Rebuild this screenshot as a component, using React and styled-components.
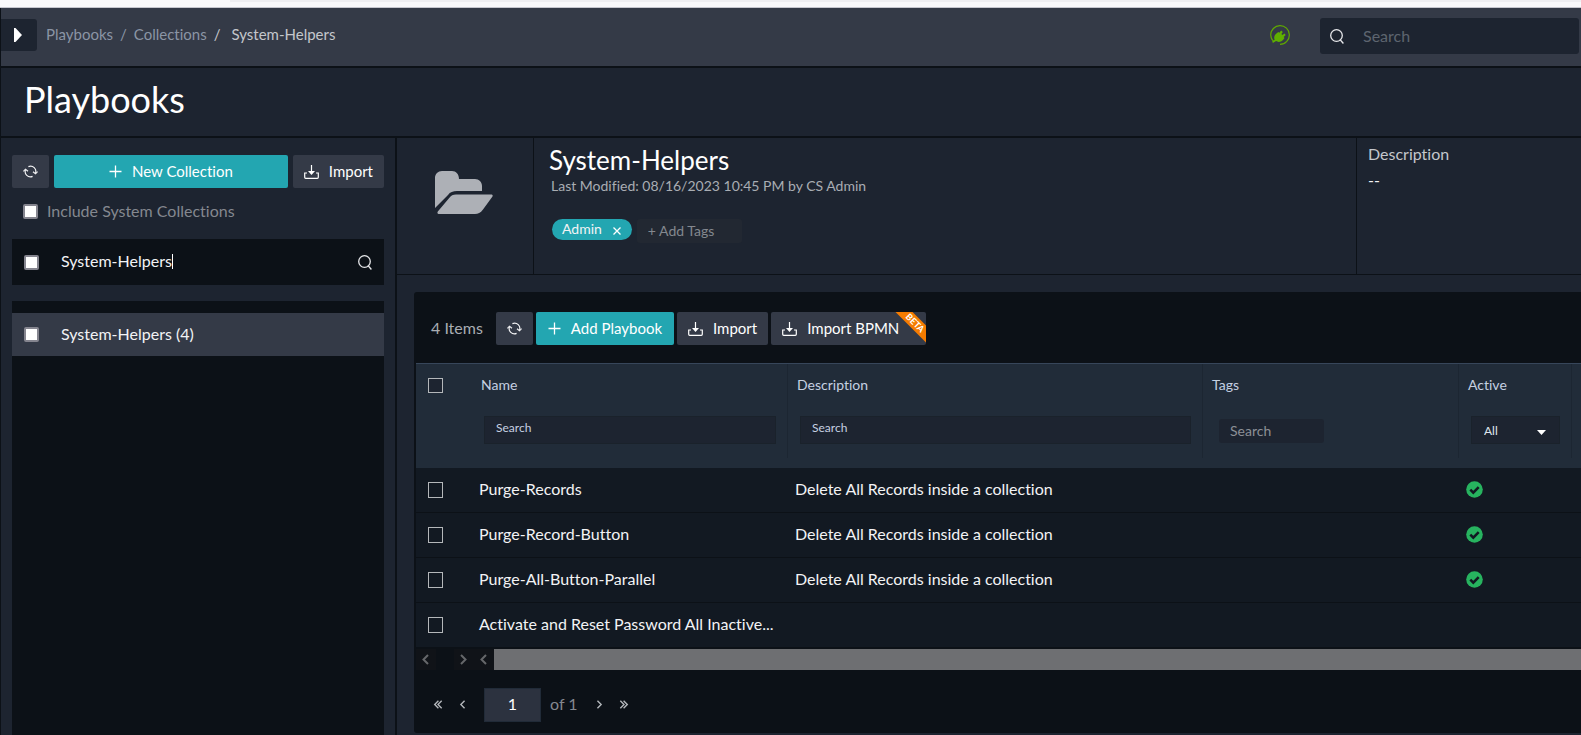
import React from "react";
import styled, { createGlobalStyle, css } from "styled-components";

const c = {
  ink: "#0c1117",
  page: "#1d2430",
  bar: "#343a47",
  row: "#121922",
  head: "#212c39",
  teal: "#23a6b1",
  text: "#f2f3f5",
  soft: "#a9adb3",
  muted: "#84888f",
  label: "#c5d0e2",
};

const GlobalStyle = createGlobalStyle`
  *, *::before, *::after { box-sizing: border-box; }
  html, body { margin: 0; background: ${c.page}; }
  body, button, input, select {
    font-family: Lato, "Liberation Sans", sans-serif;
    font-variant-ligatures: none;
  }
  body { font-size: 16px; line-height: 20px; color: ${c.text}; overflow-x: hidden; }
  button { cursor: pointer; }
  h1, h2, h3, p { margin: 0; font-weight: 400; }
  svg { display: block; flex: none; }
`;

const Page = styled.div`
  display: flex;
  flex-direction: column;
  min-height: 100vh;
`;

const BrowserEdge = styled.div`
  height: 8px;
  background: #f9f9fb;
  border-bottom: 1px solid #c6c7cf;
  &::before {
    content: "";
    display: block;
    height: 2px;
    margin-left: 230px;
    background: #efeff2;
  }
`;

const AppFrame = styled.div`
  flex: 1;
  display: flex;
  flex-direction: column;
  border-left: 1px solid ${c.ink};
`;

const TopBar = styled.header`
  display: flex;
  align-items: center;
  height: 60px;
  padding: 0 2px 4px 0;
  background: ${c.bar};
  border-bottom: 2px solid ${c.ink};
`;

const MenuToggle = styled.button`
  display: grid;
  place-items: center;
  width: 36px;
  height: 32px;
  padding: 0 2px 0 0;
  border: 0;
  border-radius: 0 3px 3px 0;
  background: ${c.page};
`;

const Crumbs = styled.nav`
  display: flex;
  gap: 7px;
  padding: 0 0 2px 9px;
  margin-right: auto;
  color: ${c.soft};
  font-size: 15px;
`;

const Crumb = styled.a`
  color: #8b95a5;
  text-decoration: none;
`;

const CrumbSlash = styled.span`
  color: ${(p) => (p.$last ? "#c4c7cc" : "#8b95a5")};
`;

const CrumbCurrent = styled.span`
  padding-left: 4px;
  color: #c4c7cc;
`;

const GlobalSearch = styled.label`
  display: flex;
  align-items: center;
  gap: 19px;
  width: 259px;
  height: 36px;
  margin: 2px 0 0 30px;
  padding: 0 10px;
  border-radius: 3px;
  background: ${c.page};
`;

const PlainInput = styled.input`
  min-width: 0;
  padding: 0;
  border: 0;
  outline: 0;
  background: transparent;
  color: ${c.text};
  font-size: 16px;
  line-height: 20px;
  caret-color: transparent;
  ${(p) => (p.$hug ? css`field-sizing: content;` : css`flex: 1;`)}
  &::placeholder { color: #5d646f; opacity: 1; }
`;

const TitleBar = styled.div`
  height: 70px;
  padding: 9px 23px;
  border-bottom: 2px solid ${c.ink};
`;

const Title = styled.h1`
  font-size: 36px;
  line-height: 44px;
  color: #fff;
`;

const Body = styled.div`
  flex: 1;
  display: flex;
`;

const Sidebar = styled.aside`
  display: flex;
  flex-direction: column;
  flex: none;
  width: 396px;
  padding: 17px 11px 0;
  border-right: 2px solid ${c.ink};
`;

const ButtonRow = styled.div`
  display: flex;
  align-items: center;
  gap: 5px;
`;

const Button = styled.button`
  position: relative;
  display: flex;
  align-items: center;
  justify-content: center;
  gap: 10px;
  height: 33px;
  padding: 0 11px;
  border: 0;
  border-radius: 2px;
  overflow: hidden;
  background: ${(p) => (p.$primary ? c.teal : c.bar)};
  color: #fff;
  font-size: 15px;
  line-height: 20px;
  white-space: nowrap;
  ${(p) => p.$primary && css`padding: 0 12px;`}
  ${(p) => p.$grow && css`flex: 1;`}
  ${(p) => p.$square && css`width: 37px; padding: 0;`}
  ${(p) => p.$ribbon && css`padding-right: 27px;`}
`;

const ButtonText = styled.span`
  padding-bottom: 2px;
`;

const IncludeRow = styled.label`
  display: flex;
  align-items: center;
  gap: 9px;
  margin-top: 13px;
  padding-left: 11px;
  color: ${c.muted};
`;

const Tick = styled.input.attrs({ type: "checkbox" })`
  appearance: none;
  flex: none;
  width: 15px;
  height: 15px;
  margin: 0;
  border: 2px solid #85858f;
  border-radius: 2px;
  background: #fff;
`;

const CollectionSearch = styled.div`
  display: flex;
  align-items: center;
  height: 46px;
  margin-top: 18px;
  padding: 0 12px;
  background: ${c.ink};
`;

const SearchText = styled.div`
  flex: 1;
  display: flex;
  align-items: center;
  padding: 0 0 2px 22px;
`;

const Caret = styled.span`
  width: 1px;
  height: 15px;
  background: #fff;
`;

const CollectionList = styled.div`
  flex: 1;
  margin-top: 16px;
  padding-top: 12px;
  background: ${c.ink};
`;

const CollectionItem = styled.label`
  display: flex;
  align-items: center;
  gap: 22px;
  height: 43px;
  padding: 0 12px;
  background: ${c.bar};
`;

const CollectionLabel = styled.span`
  padding-bottom: 2px;
`;

const Main = styled.main`
  flex: 1;
  min-width: 0;
`;

const Summary = styled.section`
  display: flex;
  height: 137px;
  border-bottom: 1px solid ${c.ink};
`;

const FolderCell = styled.div`
  width: 137px;
  padding: 33px 0 0 38px;
  border-right: 1px solid ${c.ink};
`;

const InfoCell = styled.div`
  flex: 1;
  padding: 6px 15px;
`;

const CollectionName = styled.h2`
  font-size: 26px;
  line-height: 32px;
  color: #fff;
`;

const Modified = styled.p`
  padding-left: 2px;
  font-size: 14px;
  color: ${c.soft};
`;

const TagRow = styled.div`
  display: flex;
  align-items: flex-start;
  gap: 5px;
  margin-top: 23px;
  padding-left: 3px;
`;

const Tag = styled.span`
  display: flex;
  align-items: center;
  gap: 11px;
  height: 21px;
  padding: 0 11px 0 10px;
  border-radius: 11px;
  background: ${c.teal};
  font-size: 14px;
  line-height: 18px;
`;

const TagText = styled.span`
  padding-bottom: 2px;
`;

const TagRemove = styled.button`
  padding: 3px 0 0;
  border: 0;
  background: transparent;
  color: #fff;
`;

const AddTags = styled.input`
  width: 105px;
  height: 24px;
  padding: 0 11px 2px;
  border: 0;
  border-radius: 3px;
  background: #222832;
  font-size: 14px;
  color: ${c.soft};
  &::placeholder { color: ${c.muted}; opacity: 1; }
`;

const DescriptionCell = styled.div`
  width: 225px;
  padding: 6px 11px;
  border-left: 1px solid ${c.ink};
`;

const DescriptionLabel = styled.h3`
  font-size: 16px;
  line-height: 20px;
  color: #c4c7cc;
`;

const DescriptionValue = styled.p`
  margin-top: 6px;
`;

const Panel = styled.section`
  margin: 17px 0 2px 17px;
  padding-left: 2px;
  border-radius: 3px 0 0 3px;
  background: ${c.ink};
`;

const Toolbar = styled.div`
  display: flex;
  align-items: center;
  gap: 3px;
  height: 71px;
  padding: 2px 0 0 15px;
`;

const ItemCount = styled.span`
  padding: 0 10px 2px 0;
  color: ${c.soft};
`;

const Beta = styled.span`
  position: absolute;
  top: 5px;
  right: -19px;
  width: 60px;
  background: #f57c00;
  color: #fff;
  font-size: 9px;
  font-weight: 700;
  line-height: 12px;
  text-align: center;
  transform: rotate(45deg);
`;

const TableClip = styled.div`
  overflow: hidden;
`;

const Grid = styled.table`
  width: 100%;
  table-layout: fixed;
  border-collapse: separate;
  border-spacing: 0;
`;

const Col = styled.col`
  width: ${(p) => p.$w};
`;

const Th = styled.th`
  height: 105px;
  padding: 0 0 10px;
  border-top: 1px solid #37465a;
  background: ${c.head};
  color: ${c.label};
  font-size: 14px;
  font-weight: 400;
  text-align: left;
  vertical-align: top;
`;

const HeadCell = styled.div`
  height: 94px;
  padding: 11px 11px 0 ${(p) => (p.$tick ? 12 : 9)}px;
  border-right: 1px solid ${(p) => (p.$tick ? c.head : "#1c2632")};
`;

const FilterInput = styled.input`
  display: block;
  width: calc(100% - 3px);
  height: 28px;
  margin: 21px 0 0 3px;
  padding: 0 12px 5px 11px;
  border: 1px solid #1a222b;
  background: ${c.page};
  color: ${c.label};
  font-size: 12px;
  &::placeholder { color: ${c.label}; opacity: 1; }
`;

const TagFilter = styled.input`
  display: block;
  width: 105px;
  height: 24px;
  margin: 24px 0 0 7px;
  padding: 0 11px 2px;
  border: 0;
  border-radius: 3px;
  background: ${c.page};
  font-size: 14px;
  &::placeholder { color: #8c9096; opacity: 1; }
`;

const SelectBox = styled.div`
  position: relative;
  width: 89px;
  margin: 21px 0 0 3px;
  svg { position: absolute; right: 14px; top: 14px; pointer-events: none; }
`;

const Select = styled.select`
  appearance: none;
  display: block;
  width: 100%;
  height: 28px;
  padding: 0 12px;
  border: 1px solid #1a222b;
  border-radius: 0;
  background: ${c.page};
  color: #dfe5ee;
  font-size: 12px;
`;

const Td = styled.td`
  height: 45px;
  padding: 0 4px 2px 7px;
  border-bottom: 1px solid ${c.ink};
  background: ${c.row};
  color: ${c.text};
  white-space: nowrap;
  ${(p) => p.$tick && css`padding: 0 12px;`}
`;

const GridTick = styled.input.attrs({ type: "checkbox" })`
  appearance: none;
  display: block;
  width: 15px;
  height: 16px;
  margin: 0;
  border: 1px solid #b4b7ba;
  background: ${(p) => (p.$head ? c.page : c.row)};
`;

const HeadTick = styled(GridTick)`
  margin-top: 3px;
  height: 15px;
`;

const ScrollTrack = styled.div`
  display: flex;
  align-items: center;
  height: 21px;
  margin-top: 1px;
  color: #65676a;
`;

const ScrollStep = styled.button`
  display: grid;
  place-items: center;
  width: 20px;
  height: 21px;
  padding: 0 2px 0 0;
  border: 0;
  background: #101318;
  color: inherit;
`;

const ScrollGap = styled.span`
  width: 18px;
`;

const ScrollThumb = styled.div`
  flex: 1;
  align-self: stretch;
  background: #6e6f72;
`;

const Pager = styled.nav`
  display: flex;
  align-items: center;
  height: 63px;
  padding: 6px 0 0 10px;
  color: ${c.muted};
`;

const PagerButton = styled.button`
  display: grid;
  place-items: center;
  width: 24px;
  height: 24px;
  padding: 0;
  border: 0;
  background: transparent;
  color: #b4b7bb;
`;

const PageNumber = styled.input`
  width: 57px;
  height: 34px;
  margin: 0 9px 0 10px;
  padding: 0 2px 2px;
  border: 1px solid #212b38;
  background: #2c323f;
  color: #fff;
  font-size: 16px;
  text-align: center;
`;

const PageTotal = styled.span`
  padding: 0 10px 2px 0;
`;

const RefreshIcon = () => (
  <svg width="15" height="13" viewBox="0 0 15 13" fill="none" stroke="#f0f0f2" strokeWidth="1.2">
    <path d="M2.600 4.500A5.300 5.300 0 0 0 9.600 11.400M12.400 8.500A5.300 5.300 0 0 0 5.400 1.600" />
    <path d="M.4 6.400 2.500 4.200 5 6.200M10 6.800l2.500 2 2.100-2.200" />
  </svg>
);

const PlusIcon = () => (
  <svg width="13" height="13" viewBox="0 0 13 13" stroke="#fff" strokeWidth="1.3">
    <path d="M6.500 .5v12M.5 6.500h12" />
  </svg>
);

const ImportIcon = () => (
  <svg width="15" height="14" viewBox="0 0 15 14" fill="none" stroke="#fff" strokeWidth="1.200">
    <path d="M3 8H.7v4.300c0 .6.4 1 1 1h11.600c.6 0 1-.4 1-1V8H12" />
    <path d="M7.500 0v8" />
    <path d="M4 6h7l-3.500 4z" fill="#fff" stroke="none" />
  </svg>
);

const SearchIcon = () => (
  <svg width="14" height="15" viewBox="0 0 14 15" fill="none" stroke="#e6e7ea" strokeWidth="1.300">
    <circle cx="6.500" cy="6.500" r="5.800" />
    <path d="m10 10.500 3.400 4" />
  </svg>
);

const PlugIcon = () => (
  <svg width="20" height="20" viewBox="0 0 20 20" role="img" aria-label="Connected">
    <path d="M3.600 16.600A9.300 9.300 0 1 1 16.800 16.300M16.800 16.300A9.300 9.300 0 0 1 10 19.300" fill="none" stroke="#5fa800" strokeWidth="1.200" />
    <path d="M2.800 18 2.400 16.200 4.600 14.800C3.800 13 4.200 10.500 5.800 9L8.300 6.900l1 .8 1.900-2.100 1.600 1.400L11.400 9l1 .9 2.100-1.500 1.200 1.500-2 2 .8 1-1.500 2.100c-1.900 2.100-5 2.400-6.900 1.100z" fill="#5fb000" />
  </svg>
);

const FolderIcon = () => (
  <svg width="58" height="44" viewBox="0 0 58 44" fill="#adb0b6" role="img" aria-label="Collection folder">
    <path d="M0 37V7C0 3 3 0 7 0h10c4 0 7 3 7 8h16c4 0 7 3 7 7v5H22c-4 0-7 1-9 4z" />
    <path d="M21 23.500h35c1.500 0 2.200 1 1.300 2.300L48 38.500c-2.500 3.500-5 4.500-8 4.500H4.500c-2 0-2.700-1-1.500-2.800l11-13c2-2.600 4-3.700 7-3.700z" />
  </svg>
);

const CheckIcon = () => (
  <svg width="17" height="17" viewBox="0 0 17 17" role="img" aria-label="Active">
    <circle cx="8.500" cy="8.500" r="8.300" fill="#27b35f" />
    <path d="m4.300 8.600 3 3 5.400-5.400" fill="none" stroke={c.row} strokeWidth="2.600" />
  </svg>
);

const Chevron = ({ right, double, height = 9, weight = 1.7 }) => (
  <svg width={double ? 10 : 7} height={height} viewBox={`0 0 ${double ? 11 : 7} 11`} fill="none" stroke="currentColor" strokeWidth={weight}>
    <path d={right ? "m1 1 4.500 4.500L1 10" : "M6 1 1.500 5.500 6 10"} />
    {double && <path d={right ? "m5 1 4.500 4.500L5 10" : "M10 1 5.500 5.500 10 10"} />}
  </svg>
);

const playbooks = [
  { name: "Purge-Records", description: "Delete All Records inside a collection", active: true },
  { name: "Purge-Record-Button", description: "Delete All Records inside a collection", active: true },
  { name: "Purge-All-Button-Parallel", description: "Delete All Records inside a collection", active: true },
  { name: "Activate and Reset Password All Inactive...", description: "", active: false },
];

export default function App() {
  return (
    <Page>
      <GlobalStyle />
      <BrowserEdge />
      <AppFrame>
        <TopBar>
          <MenuToggle aria-label="Expand menu">
            <svg width="8" height="14" viewBox="0 0 8 14" fill="#fff"><path d="M0 0h1.500L8 7l-6.500 7H0z" /></svg>
          </MenuToggle>
          <Crumbs aria-label="Breadcrumb">
            <Crumb href="#playbooks">Playbooks</Crumb>
            <CrumbSlash>/</CrumbSlash>
            <Crumb href="#collections">Collections</Crumb>
            <CrumbSlash $last>/</CrumbSlash>
            <CrumbCurrent>System-Helpers</CrumbCurrent>
          </Crumbs>
          <PlugIcon />
          <GlobalSearch>
            <SearchIcon />
            <PlainInput placeholder="Search" aria-label="Search" />
          </GlobalSearch>
        </TopBar>
        <TitleBar><Title>Playbooks</Title></TitleBar>
        <Body>
          <Sidebar>
            <ButtonRow>
              <Button $square aria-label="Refresh collections"><RefreshIcon /></Button>
              <Button $primary $grow><PlusIcon /><ButtonText>New Collection</ButtonText></Button>
              <Button><ImportIcon /><ButtonText>Import</ButtonText></Button>
            </ButtonRow>
            <IncludeRow><Tick />Include System Collections</IncludeRow>
            <CollectionSearch>
              <Tick aria-label="Select all collections" />
              <SearchText>
                <PlainInput $hug defaultValue="System-Helpers" aria-label="Search collections" />
                <Caret />
              </SearchText>
              <SearchIcon />
            </CollectionSearch>
            <CollectionList>
              <CollectionItem><Tick /><CollectionLabel>System-Helpers (4)</CollectionLabel></CollectionItem>
            </CollectionList>
          </Sidebar>
          <Main>
            <Summary>
              <FolderCell><FolderIcon /></FolderCell>
              <InfoCell>
                <CollectionName>System-Helpers</CollectionName>
                <Modified>Last Modified: 08/16/2023 10:45 PM by CS Admin</Modified>
                <TagRow>
                  <Tag>
                    <TagText>Admin</TagText>
                    <TagRemove aria-label="Remove tag Admin">
                      <svg width="8" height="8" viewBox="0 0 8 8" stroke="#fff" strokeWidth="1.300"><path d="m.5.5 7 7M7.500.5l-7 7" /></svg>
                    </TagRemove>
                  </Tag>
                  <AddTags placeholder="+ Add Tags" aria-label="Add tags" />
                </TagRow>
              </InfoCell>
              <DescriptionCell>
                <DescriptionLabel>Description</DescriptionLabel>
                <DescriptionValue>--</DescriptionValue>
              </DescriptionCell>
            </Summary>
            <Panel>
              <Toolbar>
                <ItemCount>4 Items</ItemCount>
                <Button $square aria-label="Refresh playbooks"><RefreshIcon /></Button>
                <Button $primary><PlusIcon /><ButtonText>Add Playbook</ButtonText></Button>
                <Button><ImportIcon /><ButtonText>Import</ButtonText></Button>
                <Button $ribbon><ImportIcon /><ButtonText>Import BPMN</ButtonText><Beta>BETA</Beta></Button>
              </Toolbar>
              <TableClip>
                <Grid>
                  <colgroup>
                    <Col $w="56px" /><Col $w="316px" /><Col $w="415px" /><Col $w="256px" /><Col $w="113px" /><Col $w="auto" />
                  </colgroup>
                  <thead>
                    <tr>
                      <Th><HeadCell $tick><HeadTick $head aria-label="Select all playbooks" /></HeadCell></Th>
                      <Th><HeadCell>Name<FilterInput placeholder="Search" aria-label="Filter by name" /></HeadCell></Th>
                      <Th><HeadCell>Description<FilterInput placeholder="Search" aria-label="Filter by description" /></HeadCell></Th>
                      <Th><HeadCell>Tags<TagFilter placeholder="Search" aria-label="Filter by tags" /></HeadCell></Th>
                      <Th>
                        <HeadCell>
                          Active
                          <SelectBox>
                            <Select aria-label="Filter by active"><option>All</option></Select>
                            <svg width="9" height="5" viewBox="0 0 9 5" fill="#fff"><path d="M0 0h9L4.500 5z" /></svg>
                          </SelectBox>
                        </HeadCell>
                      </Th>
                      <Th />
                    </tr>
                  </thead>
                  <tbody>
                    {playbooks.map((p) => (
                      <tr key={p.name}>
                        <Td $tick><GridTick aria-label={`Select ${p.name}`} /></Td>
                        <Td>{p.name}</Td>
                        <Td>{p.description}</Td>
                        <Td />
                        <Td>{p.active && <CheckIcon />}</Td>
                        <Td />
                      </tr>
                    ))}
                  </tbody>
                </Grid>
              </TableClip>
              <ScrollTrack>
                <ScrollStep aria-label="Scroll left"><Chevron height={11} weight={2} /></ScrollStep>
                <ScrollGap />
                <ScrollStep aria-label="Scroll right"><Chevron right height={11} weight={2} /></ScrollStep>
                <ScrollStep aria-label="Scroll table left"><Chevron height={11} weight={2} /></ScrollStep>
                <ScrollThumb />
              </ScrollTrack>
              <Pager aria-label="Pagination">
                <PagerButton aria-label="First page"><Chevron double /></PagerButton>
                <PagerButton aria-label="Previous page"><Chevron /></PagerButton>
                <PageNumber defaultValue="1" aria-label="Page number" />
                <PageTotal>of 1</PageTotal>
                <PagerButton aria-label="Next page"><Chevron right /></PagerButton>
                <PagerButton aria-label="Last page"><Chevron right double /></PagerButton>
              </Pager>
            </Panel>
          </Main>
        </Body>
      </AppFrame>
    </Page>
  );
}
